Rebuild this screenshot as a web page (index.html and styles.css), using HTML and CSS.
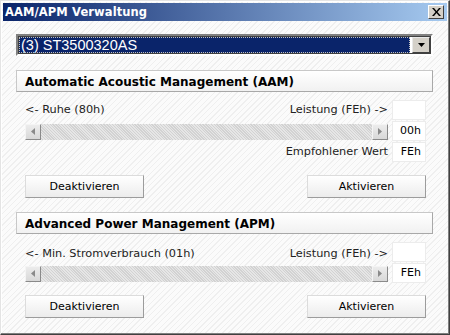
FILE: index.html
```html
<!DOCTYPE html>
<html lang="de">
<head>
    <meta charset="UTF-8">
    <title>AAM/APM Verwaltung</title>
    <link rel="stylesheet" href="styles.css">
</head>
<body>
    <div class="window">
        <div class="titlebar">
            <span class="title">AAM/APM Verwaltung</span>
            <span class="close">
                <svg width="9" height="8" viewBox="0 0 9 8"><path d="M0 0h2l2.5 3 2.5-3h2L5.5 4 9 8H7L4.5 5 2 8H0l3.5-4z" fill="#000"/></svg>
            </span>
        </div>

        <div class="content">
            <div class="select">
                <div class="select-value"><span>(3) ST3500320AS</span></div>
                <div class="select-btn">
                    <svg width="7" height="4" viewBox="0 0 7 4"><path d="M0 0h7L3.5 4z" fill="#000"/></svg>
                </div>
            </div>

            <div class="section-head">Automatic Acoustic Management (AAM)</div>
            <div class="section-body">
                <div class="row">
                    <span class="label">&lt;- Ruhe (80h)</span>
                    <span class="label right">Leistung (FEh) -&gt;</span>
                    <span class="valbox"></span>
                </div>
                <div class="row">
                    <div class="scrollbar">
                        <span class="arrow"><svg width="4" height="7" viewBox="0 0 4 7"><path d="M4 0v7L0 3.5z" fill="#8a8a8a"/></svg></span>
                        <span class="track"></span>
                        <span class="arrow"><svg width="4" height="7" viewBox="0 0 4 7"><path d="M0 0v7l4-3.5z" fill="#8a8a8a"/></svg></span>
                    </div>
                    <span class="valbox">00h</span>
                </div>
                <div class="row">
                    <span class="label right">Empfohlener Wert</span>
                    <span class="valbox">FEh</span>
                </div>
                <div class="buttons">
                    <button>Deaktivieren</button>
                    <button>Aktivieren</button>
                </div>
            </div>

            <div class="section-head">Advanced Power Management (APM)</div>
            <div class="section-body">
                <div class="row">
                    <span class="label low">&lt;- Min. Stromverbrauch (01h)</span>
                    <span class="label right low">Leistung (FEh) -&gt;</span>
                    <span class="valbox"></span>
                </div>
                <div class="row">
                    <div class="scrollbar">
                        <span class="arrow"><svg width="4" height="7" viewBox="0 0 4 7"><path d="M4 0v7L0 3.5z" fill="#8a8a8a"/></svg></span>
                        <span class="track"></span>
                        <span class="arrow"><svg width="4" height="7" viewBox="0 0 4 7"><path d="M0 0v7l4-3.5z" fill="#8a8a8a"/></svg></span>
                    </div>
                    <span class="valbox">FEh</span>
                </div>
                <div class="buttons apm">
                    <button>Deaktivieren</button>
                    <button>Aktivieren</button>
                </div>
            </div>
        </div>
    </div>
</body>
</html>
```

FILE: styles.css
```css
body {
    margin: 0;
    font-family: "DejaVu Sans", sans-serif;
    font-size: 11px;
    color: #000;
}

.window {
    width: 450px;
    height: 335px;
    box-sizing: border-box;
    padding: 3px;
    background: repeating-linear-gradient(135deg, #fbfbfb 0 3px, #efefef 3px 4px);
    border-top: 1px solid #e4e4e4;
    border-left: 1px solid #e4e4e4;
    border-right: 1px solid #404040;
    border-bottom: 1px solid #404040;
    box-shadow: inset -1px -1px 0 #808080, inset 1px 1px 0 #ffffff;
}

.titlebar {
    height: 18px;
    margin: -1px -1px 0 -1px;
    display: flex;
    align-items: center;
    justify-content: space-between;
    padding: 0 3px 0 2px;
    background: linear-gradient(to right, #0a246a, #a6caf0);
}

.title {
    color: #fff;
    font-weight: bold;
    font-size: 11.5px;
    letter-spacing: 0.1px;
}

.close {
    width: 14px;
    height: 12px;
    display: flex;
    align-items: center;
    justify-content: center;
    background: #d4d0c8;
    border: 1px solid;
    border-color: #fff #404040 #404040 #fff;
}

.content {
    padding: 13px 13px 0 12px;
}

.select {
    height: 22px;
    display: flex;
    box-sizing: border-box;
    border: 2px solid;
    border-color: #808080 #fff #fff #808080;
    outline: 1px solid #404040;
    outline-offset: -3px;
    background: #fff;
}

.select-value {
    flex: 1;
    padding: 1px;
}

.select-value span {
    display: flex;
    align-items: center;
    height: 100%;
    padding-left: 2px;
    box-sizing: border-box;
    background: #0a246a;
    color: #fff;
    font-family: "Liberation Sans", sans-serif;
    font-size: 14.5px;
    outline: 1px dotted #c0c0c0;
    outline-offset: -1px;
}

.select-btn {
    width: 16px;
    display: flex;
    align-items: center;
    justify-content: center;
    background: #d4d0c8;
    border: 1px solid;
    border-color: #e8e8e8 #404040 #404040 #e8e8e8;
    margin: 1px;
}

.section-head {
    margin-top: 14px;
    height: 22px;
    box-sizing: border-box;
    padding: 1px 0 0 8px;
    display: flex;
    align-items: center;
    font-weight: bold;
    font-size: 12px;
    border: 1px solid #c8c8c8;
    border-right-color: #a8a8a8;
    border-bottom-color: #a8a8a8;
    background: linear-gradient(#ffffff, #f1f1f1);
}

.section-body {
    padding: 7px 7px 0 9px;
}

.row {
    display: flex;
    align-items: center;
    height: 21px;
    gap: 4px;
}

.label {
    color: #222;
    white-space: nowrap;
    font-size: 11.3px;
}

.label.low {
    padding-top: 3px;
}

.label.right {
    margin-left: auto;
}

.valbox {
    width: 34px;
    height: 20px;
    box-sizing: border-box;
    border: 1px solid #ececec;
    background: #fff;
    display: flex;
    align-items: center;
    justify-content: flex-end;
    padding-right: 4px;
    flex-shrink: 0;
}

.scrollbar {
    flex: 1;
    height: 16px;
    margin-top: 2px;
    display: flex;
}

.arrow {
    width: 16px;
    box-sizing: border-box;
    display: flex;
    align-items: center;
    justify-content: center;
    background: linear-gradient(#ececec, #d8d8d8);
    border: 1px solid;
    border-color: #f4f4f4 #8a8a8a #8a8a8a #f4f4f4;
}

.track {
    flex: 1;
    background: repeating-linear-gradient(45deg, #e6e6e6 0 1px, #d2d2d2 1px 2px);
}

.buttons {
    display: flex;
    justify-content: space-between;
    margin-top: 13px;
}

.buttons.apm {
    margin-top: 12px;
}

button {
    width: 119px;
    height: 23px;
    font-family: "DejaVu Sans", sans-serif;
    font-size: 11px;
    color: #000;
    border: 1px solid;
    border-color: #dcdcdc #9c9c9c #9c9c9c #dcdcdc;
    background: linear-gradient(#ffffff, #ececec);
    padding: 0;
}
```
